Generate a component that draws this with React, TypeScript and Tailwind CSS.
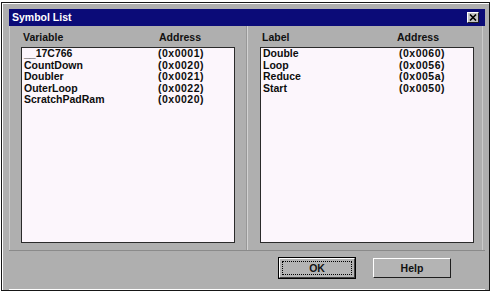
import React from "react";

type Row = { name: string; address: string };

const variables: Row[] = [
  { name: "__17C766", address: "(0x0001)" },
  { name: "CountDown", address: "(0x0020)" },
  { name: "Doubler", address: "(0x0021)" },
  { name: "OuterLoop", address: "(0x0022)" },
  { name: "ScratchPadRam", address: "(0x0020)" },
];

const labels: Row[] = [
  { name: "Double", address: "(0x0060)" },
  { name: "Loop", address: "(0x0056)" },
  { name: "Reduce", address: "(0x005a)" },
  { name: "Start", address: "(0x0050)" },
];

function SymbolPanel({
  heading,
  rows,
  nameWidth,
  headWidth,
  className,
}: {
  heading: string;
  rows: Row[];
  nameWidth: string;
  headWidth: string;
  className: string;
}) {
  return (
    <div className={`flex h-full flex-col pt-[5px] ${className}`}>
      {/* column headers */}
      <div className="flex h-[16px] pl-[2px] text-[10.5px] leading-[13px] font-bold text-[#111]">
        <div className={headWidth}>{heading}</div>
        <div>Address</div>
      </div>

      {/* list box */}
      <div className="h-[196px] border border-[#2a2a2a] bg-[#fcf6fc] pl-[2px]">
        {rows.map((r) => (
          <div
            key={r.name}
            className="flex text-[10.5px] leading-[11.6px] font-bold text-[#0d0d0d]"
          >
            <div className={nameWidth}>{r.name}</div>
            <div className="tracking-[0.5px]">{r.address}</div>
          </div>
        ))}
      </div>
    </div>
  );
}

export default function App() {
  return (
    <div className="h-[293px] w-[494px] bg-white pt-[2px] pl-[1px] font-['Liberation_Sans',Arial,sans-serif]">
      <div className="flex h-[289px] w-[489px] flex-col border border-[#161616] bg-[#afafaf] pt-[6px] pr-[4px] pl-[7px] shadow-[inset_1px_1px_0_#ffffff]">
        {/* Title bar */}
        <div className="flex h-[17px] shrink-0 items-center justify-between bg-[#0b0b78] pr-[6px] pl-[3px]">
          <span className="text-[10.5px] leading-none font-bold text-white">
            Symbol List
          </span>
          <div className="flex h-[11px] w-[12px] items-center justify-center border-t border-l border-t-white border-l-white border-r border-b border-r-[#202020] border-b-[#202020] bg-[#c4c4c4]">
            <svg width="8" height="7" viewBox="0 0 8 7">
              <path
                d="M1 0.5 L7 6.5 M7 0.5 L1 6.5"
                stroke="#000"
                strokeWidth="1.6"
              />
            </svg>
          </div>
        </div>

        {/* Body */}
        <div className="flex flex-1 flex-col border-b border-b-white">
          {/* upper panels */}
          <div className="flex h-[224px] shrink-0">
            <SymbolPanel
              heading="Variable"
              rows={variables}
              nameWidth="w-[134px]"
              headWidth="w-[136px]"
              className="w-[238px] border-l border-l-[#cbcbcb] pr-[11px] pl-[11px] border-r border-r-[#989898]"
            />
            <SymbolPanel
              heading="Label"
              rows={labels}
              nameWidth="w-[136px]"
              headWidth="w-[135px]"
              className="w-[236px] border-l border-l-[#d2d2d2] pr-[8px] pl-[12px] border-r border-r-[#cbcbcb]"
            />
          </div>

          {/* button bar */}
          <div className="flex flex-1 items-start border-t border-t-[#8a8a8a] pt-[6px] pl-[269px]">
            <button className="h-[22px] w-[78px] border border-black bg-[#b4b4b4] p-0">
              <div className="flex h-full w-full items-center justify-center border-t border-l border-t-white border-l-white border-r border-b border-r-[#404040] border-b-[#404040] p-[2px]">
                <div className="flex h-full w-full items-center justify-center border border-dotted border-black text-[10.5px] leading-none font-bold text-[#111]">
                  OK
                </div>
              </div>
            </button>
            <button className="mt-[1px] ml-[17px] flex h-[20px] w-[78px] items-center justify-center border-t border-l border-t-white border-l-white border-r border-b border-r-[#1e1e1e] border-b-[#1e1e1e] bg-[#b4b4b4] text-[10.5px] leading-none font-bold text-[#111]">
              Help
            </button>
          </div>
        </div>
      </div>
    </div>
  );
}
